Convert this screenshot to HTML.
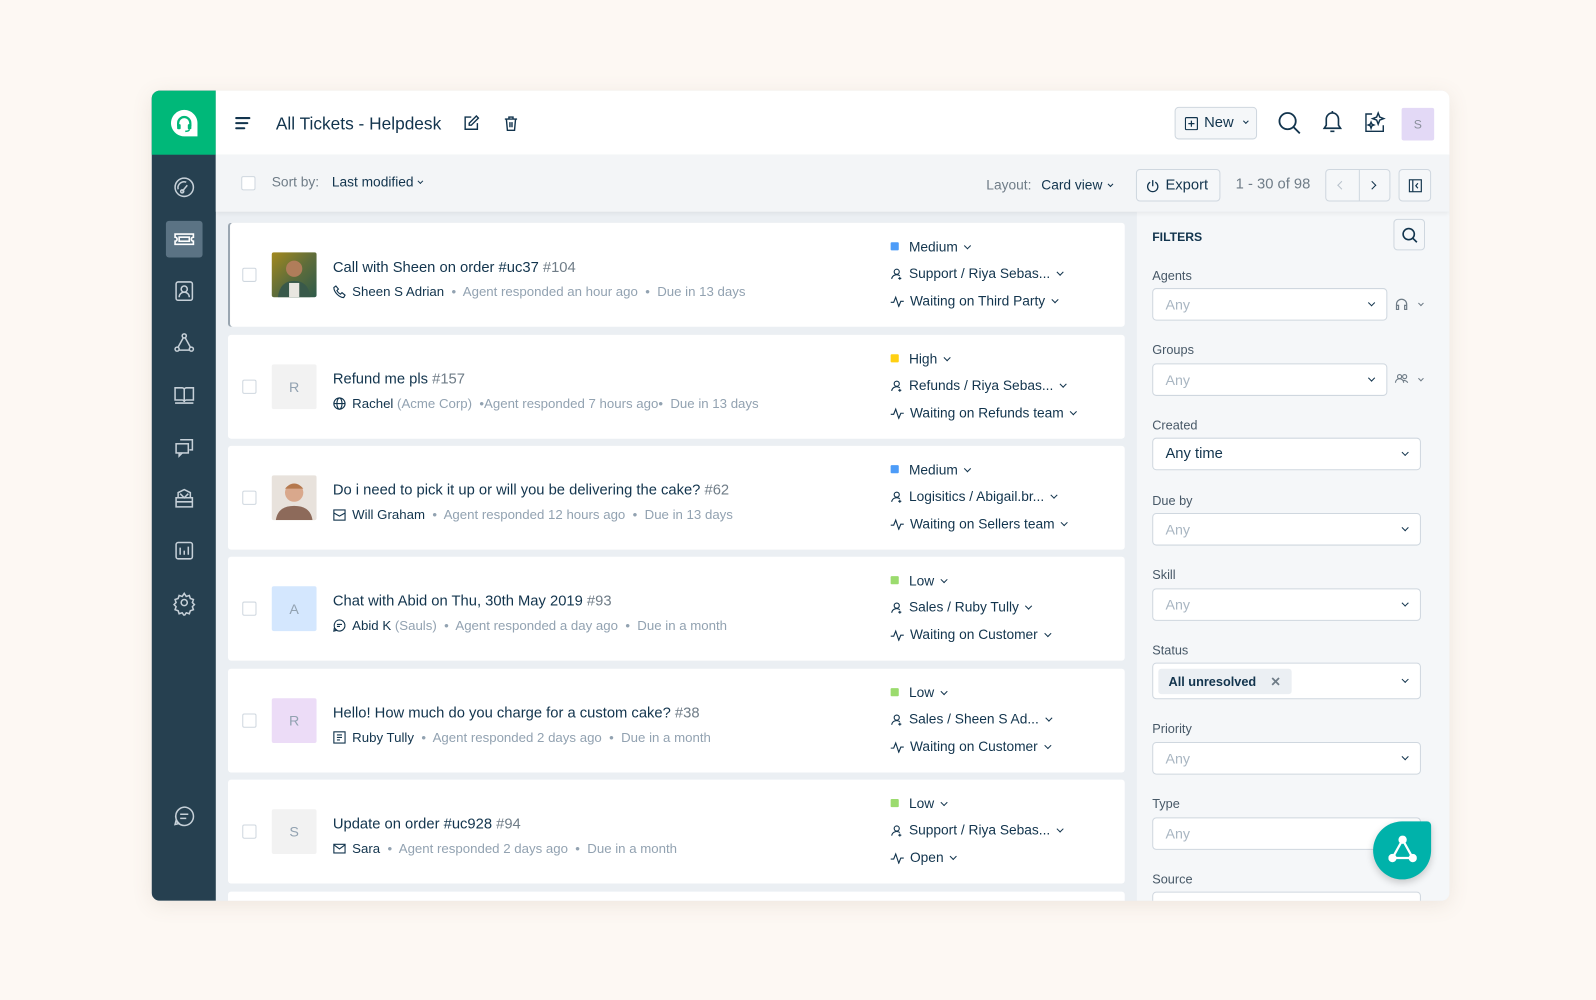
<!DOCTYPE html>
<html><head><meta charset="utf-8">
<style>
*{box-sizing:border-box;margin:0;padding:0}
html,body{width:1596px;height:1000px;overflow:hidden;background:#fdf8f3;font-family:"Liberation Sans",sans-serif;color:#12344d}
#s{position:absolute;left:0;top:0;width:1568px;height:982px;transform:scale(1.01786);transform-origin:0 0}
.frame{position:absolute;left:149px;top:89px;width:1275px;height:796px;border-radius:8px;overflow:hidden;background:#ebeff3;box-shadow:0 4px 20px rgba(120,100,80,.12)}
.side{position:absolute;left:0;top:0;width:63px;height:796px;background:#264050}
.logo{position:absolute;left:0;top:0;width:63px;height:63px;background:#00b879}
.ic{position:absolute;left:19px;width:26px;height:26px}
.hdr{position:absolute;left:63px;top:0;right:0;height:63px;background:#fff}
.tb{position:absolute;left:63px;top:63px;right:0;height:56px;background:#f3f5f7;box-shadow:0 2px 4px rgba(0,0,0,.06);z-index:2}
.abs{position:absolute}
.card{position:absolute;left:75px;width:881px;height:102px;background:#fff;border-radius:3px}
.cb{position:absolute;left:14px;top:44px;width:14px;height:14px;border:1px solid #cfd7df;border-radius:2px;background:#fff}
.av{position:absolute;left:43px;top:29px;width:44px;height:44px;border-radius:2px;font-size:14px;color:#92a2b1;text-align:center;line-height:44px}
.t{position:absolute;left:103px;top:36px;font-size:14.5px;color:#12344d;white-space:nowrap}
.t span{color:#6f7c87}
.sub{position:absolute;left:103px;top:60px;font-size:13px;color:#92a2b1;white-space:nowrap}
.sub b{font-weight:normal;color:#12344d}
.sub svg{vertical-align:-2px;margin-right:6px}
.r{position:absolute;left:651px;font-size:13.5px;color:#12344d;white-space:nowrap}
.r .sq{display:inline-block;width:8px;height:8px;border-radius:1px;margin-right:10px;vertical-align:1px}
.r svg{vertical-align:-2px;margin-right:6px}
.chev{display:inline-block;width:5px;height:5px;border-right:1.3px solid #12344d;border-bottom:1.3px solid #12344d;transform:rotate(45deg);margin-left:7px;vertical-align:3px}
.filt{position:absolute;left:968px;top:119px;right:0;bottom:0;background:#f5f7f9;z-index:1}
.lab{position:absolute;left:15px;font-size:12.5px;color:#475867}
.inp{position:absolute;left:15px;width:264px;height:32px;background:#fff;border:1px solid #cfd7df;border-radius:4px;font-size:14px;color:#a9b6c2;padding:7px 12px}
.inp .chev{position:absolute;right:12px;top:11px;margin:0}
.btn{position:absolute;background:#f5f7f9;border:1px solid #cfd7df;border-radius:4px}
</style></head><body><div id="s">
<div class="frame">
 <div class="side">
  <div class="logo"><svg class="abs" style="left:18px;top:18px" width="28" height="28" viewBox="0 0 28 28"><path d="M14 1C7 1 1 7 1 14s6 13 13 13h13V14C27 7 21 1 14 1z" fill="#fff"/><path d="M8 17v-3a6 6 0 0 1 12 0v3" fill="none" stroke="#00b879" stroke-width="2.2"/><rect x="7" y="15" width="3.5" height="5" rx="1" fill="#00b879"/><rect x="17.5" y="15" width="3.5" height="5" rx="1" fill="#00b879"/><path d="M19 20q0 2-4 2" fill="none" stroke="#00b879" stroke-width="1.5"/></svg></div>
  <svg class="ic" style="top:82px" viewBox="0 0 26 26" fill="none" stroke="#c6d0d8" stroke-width="1.5"><circle cx="13" cy="13" r="9"/><path d="M7 15a6 6 0 0 1 8-7"/><path d="M11 17l5-6"/><circle cx="11" cy="17" r="1.5"/></svg>
  <div class="abs" style="left:14px;top:128px;width:36px;height:36px;background:#5b7384;border-radius:3px"></div>
  <svg class="ic" style="top:133px" viewBox="0 0 26 26" fill="none" stroke="#fff" stroke-width="1.6"><path d="M4 8h18v3a2 2 0 0 0 0 4v3H4v-3a2 2 0 0 0 0-4z"/><rect x="8" y="11" width="10" height="4"/></svg>
  <svg class="ic" style="top:184px" viewBox="0 0 26 26" fill="none" stroke="#c6d0d8" stroke-width="1.5"><rect x="5" y="4" width="16" height="18" rx="2"/><circle cx="13" cy="11" r="3"/><path d="M8 19a5 5 0 0 1 10 0"/></svg>
  <svg class="ic" style="top:235px" viewBox="0 0 26 26" fill="none" stroke="#c6d0d8" stroke-width="1.5"><circle cx="13" cy="6" r="2"/><circle cx="6" cy="19" r="2"/><circle cx="20" cy="19" r="2"/><path d="M12 8l-5 9M14 8l5 9M8 20h10"/></svg>
  <svg class="ic" style="top:286px" viewBox="0 0 26 26" fill="none" stroke="#c6d0d8" stroke-width="1.5"><path d="M4 6h7a2 2 0 0 1 2 2v12a2 2 0 0 0-2-2H4zM22 6h-7a2 2 0 0 0-2 2v12a2 2 0 0 1 2-2h7z"/><path d="M4 21h18"/></svg>
  <svg class="ic" style="top:337px" viewBox="0 0 26 26" fill="none" stroke="#c6d0d8" stroke-width="1.5"><path d="M9 6h12v10h-3"/><rect x="5" y="10" width="12" height="9"/><path d="M8 19v3l3-3"/></svg>
  <svg class="ic" style="top:388px" viewBox="0 0 26 26" fill="none" stroke="#c6d0d8" stroke-width="1.5"><path d="M5 12h16v9H5zM7 12V7l6-3 6 3v5M5 16h16M9 8l4 4 4-4"/></svg>
  <svg class="ic" style="top:439px" viewBox="0 0 26 26" fill="none" stroke="#c6d0d8" stroke-width="1.5"><rect x="5" y="5" width="16" height="16" rx="2"/><path d="M9 10v7M13 13v4M17 9v8"/></svg>
  <svg class="ic" style="top:490px" viewBox="0 0 26 26" fill="none" stroke="#c6d0d8" stroke-width="1.5"><circle cx="13" cy="13" r="3"/><path d="M13 4l2 3 3-1 1 3 3 1-1 3 2 2-2 2 1 3-3 1-1 3-3-1-2 3-2-3-3 1-1-3-3-1 1-3-2-2 2-2-1-3 3-1 1-3 3 1z"/></svg>
  <svg class="ic" style="top:700px" viewBox="0 0 26 26" fill="none" stroke="#c6d0d8" stroke-width="1.5"><path d="M13 4a9 9 0 1 1-8 13l-1 4 4-1A9 9 0 0 1 13 4z"/><path d="M9 11h8M9 15h6"/></svg>
 </div>
 <div class="hdr">
  <svg class="abs" style="left:19px;top:25px" width="16" height="14"><path d="M1 2h13M1 7h11M1 12h8" stroke="#12344d" stroke-width="2" stroke-linecap="round"/></svg>
  <div class="abs" style="left:59px;top:23px;font-size:17px;color:#12344d">All Tickets - Helpdesk</div>
  <svg class="abs" style="left:243px;top:24px" width="16" height="16" fill="none" stroke="#12344d" stroke-width="1.4"><path d="M8 2H2v12h12V8"/><path d="M13 1l2 2-7 7H6V8z"/></svg>
  <svg class="abs" style="left:282px;top:24px" width="16" height="16" fill="none" stroke="#12344d" stroke-width="1.4"><path d="M2 4h12M6 4V2h4v2M3.5 4l1 11h7l1-11M7 7v5M9 7v5"/></svg>
  <div class="btn" style="left:942px;top:16px;width:81px;height:32px;background:#f5f7f9"><svg class="abs" style="left:9px;top:9px" width="13" height="13" fill="none" stroke="#12344d" stroke-width="1.2"><rect x=".6" y=".6" width="11.8" height="11.8" rx="1"/><path d="M6.5 3.5v6M3.5 6.5h6"/></svg><span class="abs" style="left:28px;top:7px;font-size:14.5px">New</span><span class="chev abs" style="left:60px;top:11px;width:4px;height:4px"></span></div>
  <svg class="abs" style="left:1043px;top:20px" width="24" height="24" fill="none" stroke="#12344d" stroke-width="1.8"><circle cx="10" cy="10" r="8"/><path d="M16 16l6 6"/></svg>
  <svg class="abs" style="left:1086px;top:19px" width="22" height="24" fill="none" stroke="#12344d" stroke-width="1.6"><path d="M3 18h16l-2-3V9a6 6 0 0 0-12 0v6zM9 21h4M11 3V1"/></svg>
  <svg class="abs" style="left:1127px;top:19px" width="24" height="24" fill="none" stroke="#12344d" stroke-width="1.4"><path d="M9 4H3v17h17v-6"/><path d="M15 3l1.5 4 4 1.5-4 1.5L15 14l-1.5-4-4-1.5 4-1.5zM8 12l.8 2 2 .8-2 .8L8 18l-.8-2.4-2-.8 2-.8z"/></svg>
  <div class="abs" style="left:1165px;top:17px;width:32px;height:32px;background:#e3d9f6;border-radius:2px;color:#8a8f9c;font-size:12px;text-align:center;line-height:32px">S</div>
 </div>
 <div class="tb">
  <div class="abs" style="left:25px;top:21px;width:14px;height:14px;border:1px solid #cfd7df;background:#fff;border-radius:2px"></div>
  <div class="abs" style="left:55px;top:19px;font-size:13.5px;color:#6f7c87">Sort by:</div>
  <div class="abs" style="left:114px;top:19px;font-size:13.5px;color:#12344d">Last modified<span class="chev" style="width:4px;height:4px;margin-left:5px"></span></div>
  <div class="abs" style="left:757px;top:22px;font-size:13.5px;color:#6f7c87">Layout:</div>
  <div class="abs" style="left:811px;top:22px;font-size:13.5px;color:#12344d">Card view<span class="chev" style="width:4px;height:4px;margin-left:6px"></span></div>
  <div class="btn" style="left:904px;top:14px;width:83px;height:32px"><svg class="abs" style="left:9px;top:9px" width="13" height="13" fill="none" stroke="#12344d" stroke-width="1.3"><path d="M4 3a5 5 0 1 0 5 0M6.5 1v6"/></svg><span class="abs" style="left:28px;top:7px;font-size:14.5px">Export</span></div>
  <div class="abs" style="left:1002px;top:21px;font-size:14.5px;color:#6f7c87">1 - 30 of 98</div>
  <div class="btn" style="left:1090px;top:14px;width:64px;height:32px"><div class="abs" style="left:32px;top:0;width:1px;height:30px;background:#cfd7df"></div><span class="abs" style="left:12px;top:12px;width:6px;height:6px;border-left:1.3px solid #b8c2cc;border-bottom:1.3px solid #b8c2cc;transform:rotate(45deg)"></span><span class="abs" style="left:42px;top:12px;width:6px;height:6px;border-right:1.8px solid #12344d;border-top:1.8px solid #12344d;transform:rotate(45deg)"></span></div>
  <div class="btn" style="left:1162px;top:14px;width:32px;height:32px"><svg class="abs" style="left:9px;top:9px" width="13" height="13" fill="none" stroke="#12344d" stroke-width="1.2"><rect x=".6" y=".6" width="11.8" height="11.8"/><path d="M4 1v11M9 4L7 6.5 9 9"/></svg></div>
 </div>

 <div class="card" style="top:130px;box-shadow:inset 2px 0 0 #9aa6b1"><div class="cb"></div><div class="av" style="background:linear-gradient(135deg,#a3891e,#5f6d3a 50%,#2e5a4a)"><svg width="44" height="44"><circle cx="22" cy="16" r="8" fill="#b07d5a"/><path d="M6 44q2-16 16-16t16 16z" fill="#39594a"/><rect x="17" y="30" width="10" height="14" fill="#e8e6e0"/></svg></div>
  <div class="t">Call with Sheen on order #uc37 <span>#104</span></div>
  <div class="sub"><svg width="13" height="13" fill="none" stroke="#12344d" stroke-width="1.1"><path d="M3 1l2.5 3-1.5 1.5a8 8 0 0 0 3.5 3.5L9 7.5l3 2.5-1.5 2.5C6 12 1 7 1 2.5z"/></svg><b>Sheen S Adrian</b> &nbsp;•&nbsp; Agent responded an hour ago &nbsp;•&nbsp; Due in 13 days</div>
  <div class="r" style="top:16px"><span class="sq" style="background:#4d9cf8"></span>Medium<span class="chev"></span></div>
  <div class="r" style="top:42px"><svg width="12" height="12" fill="none" stroke="#12344d" stroke-width="1.1"><circle cx="6" cy="4" r="2.5"/><path d="M1 11a5 5 0 0 1 8-3M9 9v3M7.5 10.5h3"/></svg>Support / Riya Sebas...<span class="chev"></span></div>
  <div class="r" style="top:69px"><svg width="13" height="12" fill="none" stroke="#12344d" stroke-width="1.1"><path d="M0 7h3l2-5 3 9 2-5h3"/></svg>Waiting on Third Party<span class="chev"></span></div>
 </div>

 <div class="card" style="top:240px"><div class="cb"></div><div class="av" style="background:#f2f2f2">R</div>
  <div class="t">Refund me pls <span>#157</span></div>
  <div class="sub"><svg width="13" height="13" fill="none" stroke="#12344d" stroke-width="1.1"><circle cx="6.5" cy="6.5" r="5.5"/><ellipse cx="6.5" cy="6.5" rx="2.5" ry="5.5"/><path d="M1 6.5h11"/></svg><b>Rachel</b> (Acme Corp) &nbsp;•Agent responded 7 hours ago• &nbsp;Due in 13 days</div>
  <div class="r" style="top:16px"><span class="sq" style="background:#ffd012"></span>High<span class="chev"></span></div>
  <div class="r" style="top:42px"><svg width="12" height="12" fill="none" stroke="#12344d" stroke-width="1.1"><circle cx="6" cy="4" r="2.5"/><path d="M1 11a5 5 0 0 1 8-3M9 9v3M7.5 10.5h3"/></svg>Refunds / Riya Sebas...<span class="chev"></span></div>
  <div class="r" style="top:69px"><svg width="13" height="12" fill="none" stroke="#12344d" stroke-width="1.1"><path d="M0 7h3l2-5 3 9 2-5h3"/></svg>Waiting on Refunds team<span class="chev"></span></div>
 </div>

 <div class="card" style="top:349px"><div class="cb"></div><div class="av" style="background:#e8e2dc"><svg width="44" height="44"><circle cx="22" cy="17" r="9" fill="#d9a88c"/><path d="M13 13q9-10 18 0" fill="#b5794e"/><path d="M4 44q2-14 18-14t18 14z" fill="#8d6a5a"/></svg></div>
  <div class="t">Do i need to pick it up or will you be delivering the cake? <span>#62</span></div>
  <div class="sub"><svg width="13" height="13" fill="none" stroke="#12344d" stroke-width="1.1"><rect x="1" y="2" width="11" height="10"/><path d="M1 5l5.5 3L12 5"/></svg><b>Will Graham</b> &nbsp;•&nbsp; Agent responded 12 hours ago &nbsp;•&nbsp; Due in 13 days</div>
  <div class="r" style="top:16px"><span class="sq" style="background:#4d9cf8"></span>Medium<span class="chev"></span></div>
  <div class="r" style="top:42px"><svg width="12" height="12" fill="none" stroke="#12344d" stroke-width="1.1"><circle cx="6" cy="4" r="2.5"/><path d="M1 11a5 5 0 0 1 8-3M9 9v3M7.5 10.5h3"/></svg>Logisitics / Abigail.br...<span class="chev"></span></div>
  <div class="r" style="top:69px"><svg width="13" height="12" fill="none" stroke="#12344d" stroke-width="1.1"><path d="M0 7h3l2-5 3 9 2-5h3"/></svg>Waiting on Sellers team<span class="chev"></span></div>
 </div>

 <div class="card" style="top:458px"><div class="cb"></div><div class="av" style="background:#d4e7fe">A</div>
  <div class="t">Chat with Abid on Thu, 30th May 2019 <span>#93</span></div>
  <div class="sub"><svg width="13" height="13" fill="none" stroke="#12344d" stroke-width="1.1"><path d="M6.5 1a5.5 5.5 0 1 1-5 8L1 12l3-.8A5.5 5.5 0 0 1 6.5 1zM4 5.5h5M4 7.5h3"/></svg><b>Abid K</b> (Sauls) &nbsp;•&nbsp; Agent responded a day ago &nbsp;•&nbsp; Due in a month</div>
  <div class="r" style="top:16px"><span class="sq" style="background:#9bdb6e"></span>Low<span class="chev"></span></div>
  <div class="r" style="top:42px"><svg width="12" height="12" fill="none" stroke="#12344d" stroke-width="1.1"><circle cx="6" cy="4" r="2.5"/><path d="M1 11a5 5 0 0 1 8-3M9 9v3M7.5 10.5h3"/></svg>Sales / Ruby Tully<span class="chev"></span></div>
  <div class="r" style="top:69px"><svg width="13" height="12" fill="none" stroke="#12344d" stroke-width="1.1"><path d="M0 7h3l2-5 3 9 2-5h3"/></svg>Waiting on Customer<span class="chev"></span></div>
 </div>

 <div class="card" style="top:568px"><div class="cb"></div><div class="av" style="background:#ecdcf7">R</div>
  <div class="t">Hello! How much do you charge for a custom cake? <span>#38</span></div>
  <div class="sub"><svg width="13" height="13" fill="none" stroke="#12344d" stroke-width="1.1"><rect x="1" y="1" width="11" height="11"/><path d="M4 4h5M4 6.5h5M4 9h3"/></svg><b>Ruby Tully</b> &nbsp;•&nbsp; Agent responded 2 days ago &nbsp;•&nbsp; Due in a month</div>
  <div class="r" style="top:16px"><span class="sq" style="background:#9bdb6e"></span>Low<span class="chev"></span></div>
  <div class="r" style="top:42px"><svg width="12" height="12" fill="none" stroke="#12344d" stroke-width="1.1"><circle cx="6" cy="4" r="2.5"/><path d="M1 11a5 5 0 0 1 8-3M9 9v3M7.5 10.5h3"/></svg>Sales / Sheen S Ad...<span class="chev"></span></div>
  <div class="r" style="top:69px"><svg width="13" height="12" fill="none" stroke="#12344d" stroke-width="1.1"><path d="M0 7h3l2-5 3 9 2-5h3"/></svg>Waiting on Customer<span class="chev"></span></div>
 </div>

 <div class="card" style="top:677px"><div class="cb"></div><div class="av" style="background:#f2f2f2">S</div>
  <div class="t">Update on order #uc928 <span>#94</span></div>
  <div class="sub"><svg width="13" height="13" fill="none" stroke="#12344d" stroke-width="1.1"><rect x="1" y="2.5" width="11" height="8.5"/><path d="M1 3l5.5 4L12 3"/></svg><b>Sara</b> &nbsp;•&nbsp; Agent responded 2 days ago &nbsp;•&nbsp; Due in a month</div>
  <div class="r" style="top:16px"><span class="sq" style="background:#9bdb6e"></span>Low<span class="chev"></span></div>
  <div class="r" style="top:42px"><svg width="12" height="12" fill="none" stroke="#12344d" stroke-width="1.1"><circle cx="6" cy="4" r="2.5"/><path d="M1 11a5 5 0 0 1 8-3M9 9v3M7.5 10.5h3"/></svg>Support / Riya Sebas...<span class="chev"></span></div>
  <div class="r" style="top:69px"><svg width="13" height="12" fill="none" stroke="#12344d" stroke-width="1.1"><path d="M0 7h3l2-5 3 9 2-5h3"/></svg>Open<span class="chev"></span></div>
 </div>
 <div class="card" style="top:787px"></div>

 <div class="filt">
  <div class="abs" style="left:15px;top:18px;font-size:12px;font-weight:bold;color:#12344d">FILTERS</div>
  <div class="btn" style="left:252px;top:7px;width:31px;height:31px;background:#f5f7f9"><svg class="abs" style="left:7px;top:7px" width="16" height="16" fill="none" stroke="#12344d" stroke-width="1.6"><circle cx="7" cy="7" r="5.5"/><path d="M11 11l4 4"/></svg></div>
  <div class="lab" style="top:56px">Agents</div><div class="inp" style="top:75px;width:231px">Any<span class="chev"></span></div>
  <svg class="abs" style="left:253px;top:84px" width="14" height="14" fill="none" stroke="#6f7c87" stroke-width="1.2"><path d="M2 11V7a5 5 0 0 1 10 0v4M2 8h2v4H2zM10 8h2v4h-2z"/></svg><span class="chev" style="position:absolute;left:270px;top:88px;width:4px;height:4px;border-color:#6f7c87"></span>
  <div class="lab" style="top:129px">Groups</div><div class="inp" style="top:149px;width:231px">Any<span class="chev"></span></div>
  <svg class="abs" style="left:253px;top:158px" width="14" height="12" fill="none" stroke="#6f7c87" stroke-width="1.1"><circle cx="5" cy="4" r="2"/><circle cx="10" cy="4" r="2"/><path d="M1 10a4 4 0 0 1 8 0M8 8a4 4 0 0 1 5 2"/></svg><span class="chev" style="position:absolute;left:270px;top:162px;width:4px;height:4px;border-color:#6f7c87"></span>
  <div class="lab" style="top:203px">Created</div><div class="inp" style="top:222px;color:#12344d;font-size:14.5px">Any time<span class="chev"></span></div>
  <div class="lab" style="top:277px">Due by</div><div class="inp" style="top:296px">Any<span class="chev"></span></div>
  <div class="lab" style="top:350px">Skill</div><div class="inp" style="top:370px">Any<span class="chev"></span></div>
  <div class="lab" style="top:424px">Status</div><div class="inp" style="top:443px;height:36px;padding:5px"><span style="display:inline-block;background:#ebeff3;border-radius:3px;padding:5px 10px;font-size:12.5px;font-weight:bold;color:#12344d">All unresolved &nbsp;&nbsp; <span style="color:#6f7c87">✕</span></span><span class="chev" style="top:13px"></span></div>
  <div class="lab" style="top:501px">Priority</div><div class="inp" style="top:521px">Any<span class="chev"></span></div>
  <div class="lab" style="top:575px">Type</div><div class="inp" style="top:595px">Any</div>
  <div class="lab" style="top:649px">Source</div><div class="inp" style="top:668px"></div>
  <div class="abs" style="left:232px;top:599px;width:57px;height:57px;background:#00b2aa;border-radius:50% 4px 50% 50%;box-shadow:0 3px 8px rgba(0,0,0,.2)"><svg class="abs" style="left:15px;top:14px" width="28" height="28" fill="none" stroke="#fff" stroke-width="2.2"><path d="M14 4L4 22h20z"/><circle cx="14" cy="4" r="3" fill="#fff"/><circle cx="4" cy="22" r="3" fill="#fff"/><circle cx="24" cy="22" r="3" fill="#fff"/></svg></div>
 </div>
</div>
</div></body></html>
